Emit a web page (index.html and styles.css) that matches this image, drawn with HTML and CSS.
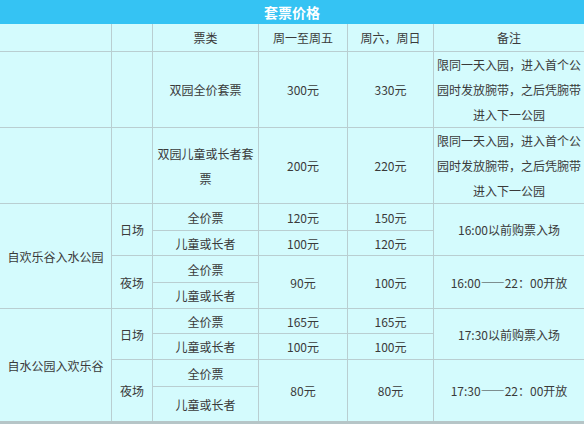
FILE: index.html
```html
<!DOCTYPE html>
<html lang="zh-CN">
<head>
<meta charset="utf-8">
<title>套票价格</title>
<link rel="stylesheet" href="styles.css">
</head>
<body>
<div class="price-box">
  <div class="title-bar">套票价格</div>
  <div class="grid">
    <div class="cell"></div>
    <div class="cell"></div>
    <div class="cell">票类</div>
    <div class="cell">周一至周五</div>
    <div class="cell">周六，周日</div>
    <div class="cell">备注</div>

    <div class="cell"></div>
    <div class="cell"></div>
    <div class="cell">双园全价套票</div>
    <div class="cell">300元</div>
    <div class="cell">330元</div>
    <div class="cell">限同一天入园，进入首个公园时发放腕带，之后凭腕带进入下一公园</div>

    <div class="cell"></div>
    <div class="cell"></div>
    <div class="cell">双园儿童或长者套票</div>
    <div class="cell">200元</div>
    <div class="cell">220元</div>
    <div class="cell">限同一天入园，进入首个公园时发放腕带，之后凭腕带进入下一公园</div>

    <div class="cell span4">自欢乐谷入水公园</div>
    <div class="cell span2">日场</div>
    <div class="cell">全价票</div>
    <div class="cell">120元</div>
    <div class="cell">150元</div>
    <div class="cell span2">16:00以前购票入场</div>
    <div class="cell">儿童或长者</div>
    <div class="cell">100元</div>
    <div class="cell">120元</div>

    <div class="cell span2">夜场</div>
    <div class="cell">全价票</div>
    <div class="cell span2">90元</div>
    <div class="cell span2">100元</div>
    <div class="cell span2">16:00——22：00开放</div>
    <div class="cell">儿童或长者</div>

    <div class="cell span4">自水公园入欢乐谷</div>
    <div class="cell span2">日场</div>
    <div class="cell">全价票</div>
    <div class="cell">165元</div>
    <div class="cell">165元</div>
    <div class="cell span2">17:30以前购票入场</div>
    <div class="cell">儿童或长者</div>
    <div class="cell">100元</div>
    <div class="cell">100元</div>

    <div class="cell span2">夜场</div>
    <div class="cell">全价票</div>
    <div class="cell span2">80元</div>
    <div class="cell span2">80元</div>
    <div class="cell span2">17:30——22：00开放</div>
    <div class="cell">儿童或长者</div>
  </div>
</div>
</body>
</html>
```
FILE: styles.css
```css
html, body {
  margin: 0;
  padding: 0;
  background: #ffffff;
  overflow: hidden;
}

.price-box {
  width: 584px;
  font-family: "Noto Sans CJK SC", "Noto Sans", sans-serif;
  font-size: 12px;
  color: #3a3a3a;
}

.title-bar {
  height: 24px;
  line-height: 24px;
  background: #35c3f3;
  color: #ffffff;
  font-weight: bold;
  font-size: 14px;
  text-align: center;
}

.grid {
  display: grid;
  grid-template-columns: 111px 40px 105px 88px 85px 150px;
  grid-template-rows: 27px 75px 75px 26px 24px 26px 25px 24px 25px 26px 34px;
  gap: 1px;
  background: #b9ced1;
  border-bottom: 3px solid #b6c5c7;
}

.cell {
  background: #d4fbfd;
  display: flex;
  align-items: center;
  justify-content: center;
  text-align: center;
  line-height: 25px;
  padding: 0 3px;
  overflow: hidden;
}

.span2 {
  grid-row: span 2;
}

.span4 {
  grid-row: span 4;
}
```
